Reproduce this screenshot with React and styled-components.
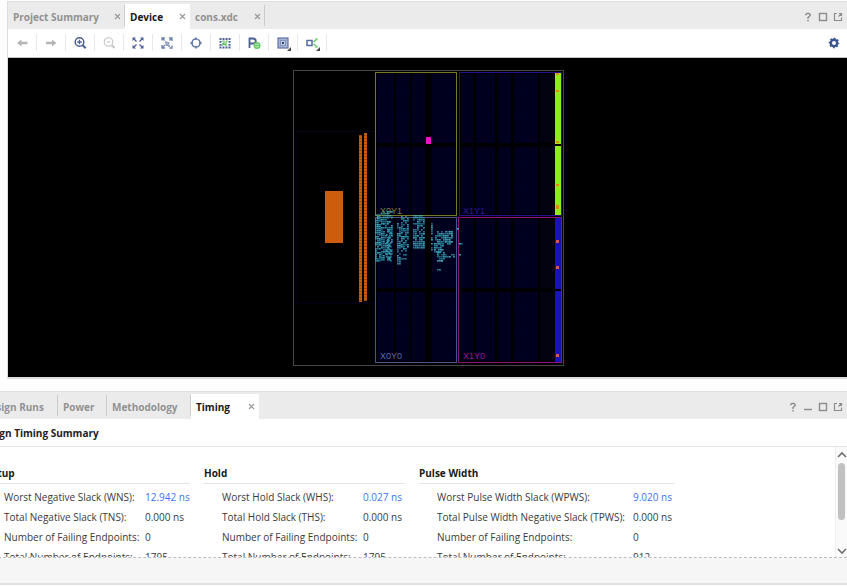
import React from "react";
import styled, { createGlobalStyle } from "styled-components";

const Global = createGlobalStyle`
  * { box-sizing: border-box; }
  body {
    margin: 0;
    overflow: hidden;
    background: #fdfdfd;
    color: #3a3a3a;
    font: 10px/20px "Open Sans", "Noto Sans", sans-serif;
  }
  button { font: inherit; color: inherit; border: 0; padding: 0; background: none; }
  svg { display: block; }
`;

const Page = styled.div`
  display: flex;
  flex-direction: column;
  height: 100vh;
  overflow: hidden;
`;

const DevicePanel = styled.section`
  display: flex;
  flex-direction: column;
  flex: 1;
  min-height: 0;
  margin: 1px 0 12px 7px;
  border: solid #dedede;
  border-width: 1px 0 2px 1px;
`;

const TabBar = styled.div`
  display: flex;
  flex: none;
  height: 27px;
  padding-top: 1px;
  background: #ebebeb;
`;

const Tab = styled.div`
  display: flex;
  align-items: center;
  justify-content: space-between;
  width: ${(p) => p.$width}px;
  margin-top: 1px;
  padding: 0 4px 0 5px;
  font-weight: 700;
  color: ${(p) => (p.$active ? "#161616" : "#929292")};
  background: ${(p) => (p.$active ? "#ffffff" : "transparent")};
  position: relative;
  &::after {
    content: "";
    position: absolute;
    right: 0;
    top: 1px;
    height: 21px;
    border-right: ${(p) => (p.$divider ? "1px solid #cccccc" : "0")};
  }
`;

const TabLabel = styled.button`
  white-space: nowrap;
`;

const CloseButton = styled.button`
  width: 7px;
  height: 7px;
  color: #989898;
`;

const PanelActions = styled.div`
  display: flex;
  align-items: center;
  gap: 5px;
  margin-left: auto;
  padding: 2px 4px 0 0;
  color: #8c8c8c;
`;

const ActionButton = styled.button`
  width: 10px;
  height: 12px;
`;

const Toolbar = styled.div`
  display: flex;
  align-items: center;
  flex: none;
  height: 29px;
  padding-bottom: 1px;
  background: #ffffff;
  border-bottom: 1px solid #c4c4c4;
`;

const ToolButton = styled.button`
  display: flex;
  align-items: center;
  justify-content: center;
  width: 29px;
  height: 17px;
  border-right: 1px solid #e8e8e8;
`;

const SettingsButton = styled.button`
  margin-left: auto;
  padding-right: 6px;
`;

const Canvas = styled.div`
  display: flex;
  align-items: center;
  justify-content: center;
  flex: 1;
  min-height: 0;
  padding-left: 1px;
  background: #000000;
`;

const TimingPanel = styled.section`
  flex: none;
  margin-left: -22px;
  border-top: 1px solid #dedede;
`;

const SummaryTitle = styled.h2`
  margin: 0;
  padding: 4px 0 3px;
  font-size: 10px;
  line-height: 20px;
  color: #222222;
  background: #ffffff;
  border-bottom: 1px solid #e4e4e4;
`;

const SummaryArea = styled.div`
  display: flex;
  height: 111px;
  background: #ffffff;
  border-bottom: 1px dashed #bcbcbc;
`;

const Groups = styled.div`
  display: flex;
  align-items: flex-start;
  gap: 14px;
  flex: 1;
  height: 110px;
  overflow: hidden;
  padding: 17px 0 0 8px;
`;

const Group = styled.section`
  flex: none;
  width: ${(p) => p.$width}px;
`;

const GroupTitle = styled.h3`
  margin: 0 0 3px;
  font-size: 10px;
  line-height: 19px;
  color: #181818;
  border-bottom: 1px solid #e4e4e4;
`;

const Metrics = styled.table`
  width: 100%;
  table-layout: fixed;
  border-collapse: collapse;
  td, th {
    height: 20px;
    padding: 0;
    text-align: left;
    font-weight: 400;
    white-space: nowrap;
  }
  th { width: ${(p) => p.$label}px; padding-left: 18px; }
`;

const ValueLink = styled.a`
  color: #3f74f2;
  text-decoration: none;
`;

const ScrollTrack = styled.div`
  display: flex;
  flex-direction: column;
  align-items: center;
  width: 12px;
  padding: 4px 0 2px;
  background: #fafafa;
  border-left: 1px solid #eeeeee;
`;

const ScrollThumb = styled.div`
  width: 7px;
  height: 57px;
  margin: 4px 0 auto;
  border-radius: 4px;
  background: #c1c1c1;
`;

const Footer = styled.div`
  height: 28px;
  background: #f6f6f6;
  border-bottom: 3px solid #fbfbfb;
  &::after {
    content: "";
    display: block;
    height: 25px;
    border-bottom: 2px solid #e1e1e1;
  }
`;

const NAVY = "#4a6096";
const GREEN = "#62c962";

const Close = () => (
  <CloseButton aria-label="Close tab">
    <svg width="7" height="7" viewBox="0 0 7 7" stroke="currentColor" strokeWidth="1.1">
      <path d="M1 1l5 5M6 1L1 6" />
    </svg>
  </CloseButton>
);

const actionShapes = {
  Help: <path d="M2.700 4.200V3.500L4 2.500h2L7.200 3.500v1L5 6.500V8M5 9v1.500" strokeWidth="1.400" />,
  Minimize: <path d="M1 8.500h8" strokeWidth="1.500" />,
  Maximize: <rect x="1.500" y="2.500" width="7" height="7" strokeWidth="1.400" />,
  Float: <path d="M4 2.500H1.500v7h7V6.500M6 2.500h2.500v2.500M8.500 2.500L5.500 5.500" strokeWidth="1.200" />,
};

const Actions = ({ names }) => (
  <PanelActions>
    {names.map((n) => (
      <ActionButton key={n} aria-label={n}>
        <svg width="10" height="12" viewBox="0 0 10 12" fill="none" stroke="currentColor">
          {actionShapes[n]}
        </svg>
      </ActionButton>
    ))}
  </PanelActions>
);

const Menu = () => <path d="M16 12v4h-4z" fill="#444444" />;

const tools = [
  ["Back", <path d="M3 8l4.500-3.500v2.300h6v2.400h-6v2.300z" fill="#b5b5b5" />],
  ["Forward", <path d="M13.500 8L9 4.500v2.300H3v2.400h6v2.300z" fill="#b5b5b5" />],
  ["Zoom in", <g stroke={NAVY} fill="none"><circle cx="7.500" cy="7" r="4.300" strokeWidth="1.500" /><path d="M10.500 10l3.200 3.200" strokeWidth="2" /><path d="M5.300 7h4.400M7.500 4.800v4.400" strokeWidth="1.300" /></g>],
  ["Zoom out", <g stroke="#c4c4c4" fill="none"><circle cx="7.500" cy="7" r="4.300" strokeWidth="1.100" /><path d="M10.500 10l3.200 3.200" strokeWidth="1.800" /><path d="M5.500 7h4" /></g>],
  ["Zoom fit", <g stroke={NAVY} fill={NAVY}><path d="M3.500 3.500l3 3M12.500 3.500l-3 3M3.500 12.500l3-3M12.500 12.500l-3-3" strokeWidth="1.400" /><path d="M2.500 2.500h3.500l-3.500 3.500zM13.500 2.500v3.500l-3.500-3.500zM2.500 13.500v-3.500l3.500 3.500zM13.500 13.500h-3.500l3.500-3.500z" stroke="none" /></g>],
  ["Zoom to selection", <g stroke="#7183ad" fill="none" strokeWidth="1.300"><path d="M3 5.500V3h3M10 3h3v3M3 10v3h3M10.500 13H13v-2.500M3.500 3.500l2 2M12.500 3.500l-2 2M3.500 12.500l2.500-2.500" /><path d="M6.500 6.500l4 1.500-1.500 1 2 2-1 1-2-2-.8 1z" fill="#a9b5d0" strokeWidth="0.700" /></g>],
  ["Center selection", <g stroke="#6479a8" fill="none"><circle cx="8" cy="8" r="4.100" strokeWidth="1.300" strokeDasharray="4.600 1.840" strokeDashoffset="-0.900" /><path d="M8 2.500v2.500M8 11v2.500M2.500 8H5M11 8h2.500" strokeWidth="1.800" /></g>],
  ["Routing resources", <g fill={NAVY}>{[3.5, 6.5, 9.5, 12.5].flatMap((x) => [<rect key={x} x={x - 1} y="3" width="2" height="2" />, <rect key={x + 20} x={x - 1} y="11.500" width="2" height="2" />])}<path d="M2.500 6h2v1.700h-2zM2.500 9h2v1.700h-2zM11.500 6h2v1.700h-2zM11.500 9h2v1.700h-2z" /><path d="M5 6h2v2.500l2.500 2.500M10.500 5.500L9 7v4M5 10.500L7.500 8M5 8.500h2" fill="none" stroke={GREEN} strokeWidth="1.200" /></g>],
  ["Draw Pblock", <g fill="none"><path d="M3.500 13V3.500h3.300c4 0 4 5 0 5H3.500" stroke={NAVY} strokeWidth="1.800" /><circle cx="11" cy="10.500" r="2.700" fill="#ffffff" stroke={GREEN} strokeWidth="1.600" /><path d="M9 10.500h4M11 8.500v4" stroke={GREEN} strokeWidth="1.100" /></g>],
  ["Cell view", <g><rect x="3" y="3" width="10" height="10" fill="#a6b3d1" stroke="#5d73a6" strokeWidth="1.200" /><rect x="5.500" y="5.500" width="5" height="5" fill="#c6cfe2" stroke="#8193bb" /><rect x="7" y="7" width="2" height="2" fill="#27406f" /><Menu /></g>],
  ["Connectivity", <g fill="none"><rect x="3" y="5.500" width="5" height="5" stroke="#566da4" strokeWidth="1.500" /><path d="M9.500 7l3-2.500M9.500 9l3 2.500" stroke={GREEN} strokeWidth="1.500" /><path d="M11 3.200h2.500v2.500zM11 12.800h2.500v-2.500z" fill={GREEN} /><Menu /></g>],
];

const Gear = () => (
  <svg width="14" height="14" viewBox="0 0 14 14">
    <g fill="none" stroke="#3c568f">
      <circle cx="7" cy="7" r="3.200" strokeWidth="2.400" />
      <circle cx="7" cy="7" r="4.500" strokeWidth="1.600" strokeDasharray="1.770 1.764" strokeDashoffset="0.885" />
    </g>
  </svg>
);

const columns = [
  [377, 17], [396, 14], [412, 13], [432, 24],
  [461, 12], [476, 19], [498, 13], [514, 24],
];
const bands = [[74, 69], [147, 67], [219, 69], [292, 69]];

// [x, y, columns, rows, fill ratio]
const clusters = [
  [375, 214, 3, 24, 0.85], [381, 211, 6, 25, 0.75], [386, 230, 3, 16, 0.5],
  [397, 223, 2, 21, 0.75], [401, 216, 4, 18, 0.7], [401, 250, 3, 5, 0.35],
  [413, 215, 6, 17, 0.75], [431, 223, 1, 14, 0.7], [435, 231, 9, 6, 0.85],
  [434, 243, 5, 5, 0.8], [437, 252, 4, 5, 0.65], [443, 254, 6, 2, 0.7],
  [445, 235, 3, 5, 0.6], [437, 260, 3, 1, 1], [437, 269, 2, 1, 1],
  [457, 228, 1, 1, 1], [459, 243, 2, 1, 1], [459, 254, 1, 1, 1],
];

const cells = clusters.flatMap(([x, y, nc, nr, fill], k) => {
  const out = [];
  for (let r = 0; r < nr; r++) {
    for (let c = 0; c < nc; c++) {
      const v = Math.sin(k * 37.7 + r * 12.9898 + c * 78.233) * 43758.5453;
      const n = v - Math.floor(v);
      if (n < fill) out.push({ x: x + c * 2, y: y + r * 2, o: 0.5 + n * 0.6 });
    }
  }
  return out;
});

const Chip = () => (
  <svg width="273" height="297" viewBox="292 69 273 297" role="img" aria-label="Device floorplan">
    <defs>
      <pattern id="sites" width="3" height="3" patternUnits="userSpaceOnUse">
        <rect width="3" height="3" fill="#000022" />
        <path d="M0 0h3M0 0v3" stroke="#000018" />
      </pattern>
      <pattern id="pads" width="4" height="3" patternUnits="userSpaceOnUse">
        <rect width="4" height="3" fill="#cc5d0d" />
        <rect width="4" height="1" fill="#9a480a" />
      </pattern>
    </defs>
    <rect x="293.500" y="70.500" width="270" height="295" fill="none" stroke="#454545" />
    <path d="M296 303V131.500H375M296 303h79" fill="none" stroke="#05051c" />
    <g fill="url(#sites)">
      {columns.flatMap(([x, w]) => bands.map(([y, h]) => <rect key={`${x}-${y}`} x={x} y={y} width={w} height={h} />))}
    </g>
    <g fill="#020210">
      {bands.map(([y, h]) => <rect key={y} x="540" y={y} width="14" height={h} />)}
    </g>
    <rect x="325" y="191" width="18" height="52" fill="#cd5d0c" />
    <rect x="359" y="135" width="3" height="167" fill="url(#pads)" />
    <rect x="364" y="133" width="3" height="168" fill="url(#pads)" />
    <g fill="#8cec1c">
      <rect x="555" y="73" width="6" height="71" />
      <rect x="555" y="146" width="6" height="70" />
    </g>
    <g fill="#1713b8">
      <rect x="555" y="217" width="6" height="72" />
      <rect x="555" y="291" width="6" height="71" />
    </g>
    <g fill="#e28a18">
      {[73, 90, 141, 184, 205, 207].map((y) => <rect key={y} x="556" y={y} width="3" height="2" />)}
    </g>
    <g fill="#d05a50">
      {[240, 266, 354].map((y) => <rect key={y} x="556" y={y} width="3" height="3" />)}
    </g>
    <g fill="none">
      <rect x="375.500" y="72.500" width="81" height="143" stroke="#77772c" />
      <rect x="459.500" y="72.500" width="102" height="143" stroke="#281092" />
      <rect x="375.500" y="217.500" width="81" height="145" stroke="#43558c" />
      <rect x="458.500" y="217.500" width="103" height="145" stroke="#92107e" />
    </g>
    <rect x="426" y="137" width="5" height="7" fill="#f20fc4" />
    <g fontFamily="Liberation Sans, sans-serif" fontSize="9">
      <text x="380" y="214" fill="#807f42">X0Y1</text>
      <text x="463" y="214" fill="#2e198b">X1Y1</text>
      <text x="380" y="359" fill="#5d6ba8">X0Y0</text>
      <text x="463" y="359" fill="#9b188c">X1Y0</text>
    </g>
    <g fill="#3bb5c4">
      {cells.map((c, i) => <rect key={i} x={c.x} y={c.y} width="1.800" height="1.600" opacity={c.o} />)}
    </g>
  </svg>
);

const groups = [
  { title: "Setup", width: 204, label: 159, rows: [["Worst Negative Slack (WNS):", "12.942 ns"], ["Total Negative Slack (TNS):", "0.000 ns"], ["Number of Failing Endpoints:", "0"], ["Total Number of Endpoints:", "1795"]] },
  { title: "Hold", width: 201, label: 159, rows: [["Worst Hold Slack (WHS):", "0.027 ns"], ["Total Hold Slack (THS):", "0.000 ns"], ["Number of Failing Endpoints:", "0"], ["Total Number of Endpoints:", "1795"]] },
  { title: "Pulse Width", width: 255, label: 214, rows: [["Worst Pulse Width Slack (WPWS):", "9.020 ns"], ["Total Pulse Width Negative Slack (TPWS):", "0.000 ns"], ["Number of Failing Endpoints:", "0"], ["Total Number of Endpoints:", "912"]] },
];

const Arrow = ({ d }) => (
  <svg width="10" height="8" viewBox="0 0 10 8" fill="none" stroke="#707070" strokeWidth="1.600">
    <path d={d} />
  </svg>
);

export default function App() {
  return (
    <Page>
      <Global />
      <DevicePanel>
        <TabBar>
          <Tab $width={117} $divider><TabLabel>Project Summary</TabLabel><Close /></Tab>
          <Tab $width={65} $active><TabLabel>Device</TabLabel><Close /></Tab>
          <Tab $width={75} $divider><TabLabel>cons.xdc</TabLabel><Close /></Tab>
          <Actions names={["Help", "Maximize", "Float"]} />
        </TabBar>
        <Toolbar>
          {tools.map(([name, shape]) => (
            <ToolButton key={name} aria-label={name}>
              <svg width="16" height="16" viewBox="0 0 16 16">{shape}</svg>
            </ToolButton>
          ))}
          <SettingsButton aria-label="Settings"><Gear /></SettingsButton>
        </Toolbar>
        <Canvas><Chip /></Canvas>
      </DevicePanel>
      <TimingPanel>
        <TabBar>
          <Tab $width={80} $divider><TabLabel>Design Runs</TabLabel></Tab>
          <Tab $width={49} $divider><TabLabel>Power</TabLabel></Tab>
          <Tab $width={84} $divider><TabLabel>Methodology</TabLabel></Tab>
          <Tab $width={68} $active><TabLabel>Timing</TabLabel><Close /></Tab>
          <Actions names={["Help", "Minimize", "Maximize", "Float"]} />
        </TabBar>
        <SummaryTitle>Design Timing Summary</SummaryTitle>
        <SummaryArea>
          <Groups>
            {groups.map((g) => (
              <Group key={g.title} $width={g.width}>
                <GroupTitle>{g.title}</GroupTitle>
                <Metrics $label={g.label}>
                  <tbody>
                    {g.rows.map(([label, value], i) => (
                      <tr key={label}>
                        <th scope="row">{label}</th>
                        <td>{i === 0 ? <ValueLink href="#path">{value}</ValueLink> : value}</td>
                      </tr>
                    ))}
                  </tbody>
                </Metrics>
              </Group>
            ))}
          </Groups>
          <ScrollTrack>
            <Arrow d="M1 6l4-4 4 4" />
            <ScrollThumb />
            <Arrow d="M1 2l4 4 4-4" />
          </ScrollTrack>
        </SummaryArea>
        <Footer />
      </TimingPanel>
    </Page>
  );
}
